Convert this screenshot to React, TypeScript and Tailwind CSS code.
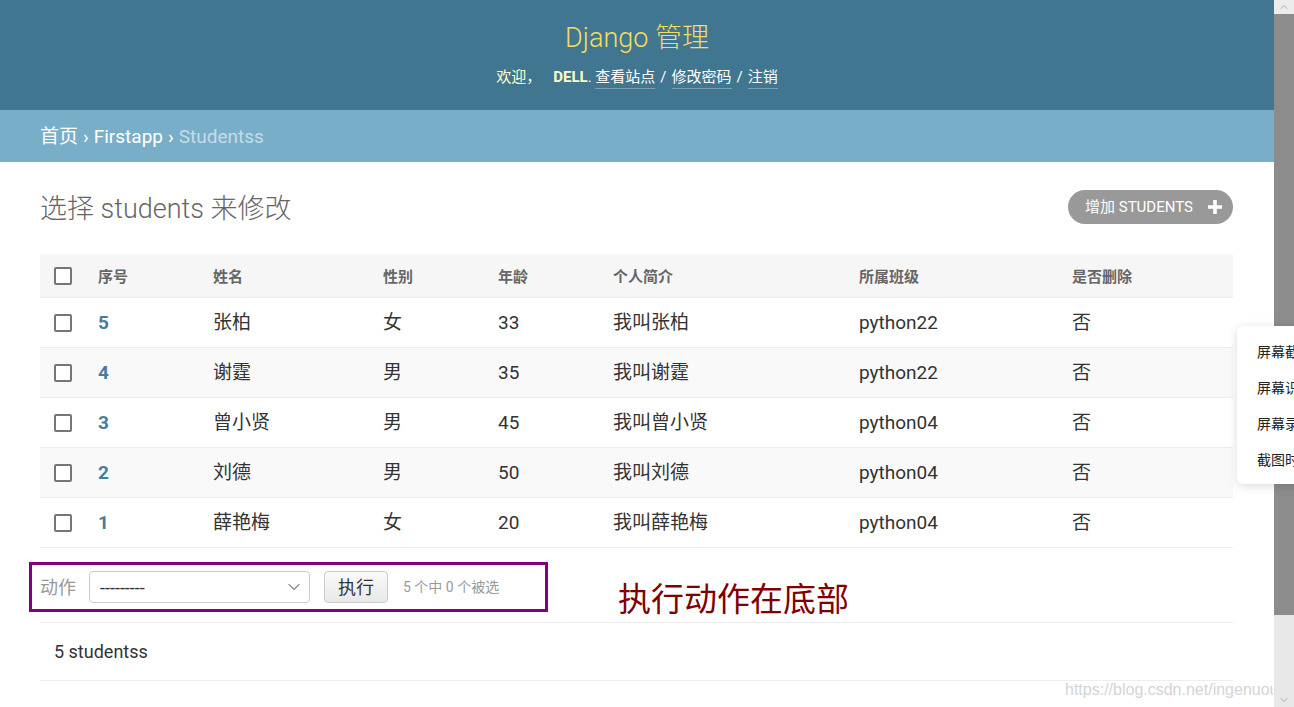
import { ChevronDown, ChevronUp } from "lucide-react";

const font = "font-['Roboto','Noto_Sans_CJK_SC',sans-serif]";

const rows = [
  { id: 5, name: "张柏", sex: "女", age: 33, intro: "我叫张柏", cls: "python22" },
  { id: 4, name: "谢霆", sex: "男", age: 35, intro: "我叫谢霆", cls: "python22" },
  { id: 3, name: "曾小贤", sex: "男", age: 45, intro: "我叫曾小贤", cls: "python04" },
  { id: 2, name: "刘德", sex: "男", age: 50, intro: "我叫刘德", cls: "python04" },
  { id: 1, name: "薛艳梅", sex: "女", age: 20, intro: "我叫薛艳梅", cls: "python04" },
];

const cols = "grid grid-cols-[58px_115px_170px_115px_115px_246px_213px_1fr] items-center";

const Checkbox = () => (
  <div className="ml-[14px] -mt-[2px] w-[18px] h-[18px] border-2 border-[#767676] rounded-[2px] bg-white" />
);

const App = () => {
  return (
    <div className={`relative w-[1294px] h-[707px] overflow-hidden flex bg-white ${font}`}>
      <div className="w-[1274px] flex flex-col">
        {/* header */}
        <header className="h-[110px] bg-[#417690] flex flex-col items-center">
          <div className="mt-[20px] text-[27px] leading-[36px] font-light text-[#f5dd5d]">Django 管理</div>
          <div className="mt-[9px] text-[15px] leading-[24px] text-[#ffffcc] flex items-center">
            <span>欢迎，</span>
            <strong className="ml-[12px] font-bold">DELL</strong>
            <span>.&nbsp;</span>
            <a className="text-white border-b border-white/30 leading-[22px]">查看站点</a>
            <span className="text-white mx-[5px]">/</span>
            <a className="text-white border-b border-white/30 leading-[22px]">修改密码</a>
            <span className="text-white mx-[5px]">/</span>
            <a className="text-white border-b border-white/30 leading-[22px]">注销</a>
          </div>
        </header>

        {/* breadcrumbs */}
        <div className="h-[52px] bg-[#79aec8] flex items-center px-[40px] pt-[3px] text-[19px] text-white">
          <span>首页</span>
          <span className="mx-[5px]">›</span>
          <span>Firstapp</span>
          <span className="mx-[5px]">›</span>
          <span className="text-[#c4dce8]">Studentss</span>
        </div>

        {/* content */}
        <div className="px-[40px] pt-[28px]">
          <div className="flex items-center justify-between h-[34px] pr-[1px]">
            <h1 className="text-[27px] font-light text-[#666] pt-[4px]">选择 students 来修改</h1>
            <button className="h-[34px] w-[165px] rounded-full bg-[#999] text-white text-[15px] flex items-center pl-[17px] pr-[11px] justify-between">
              <span>增加 STUDENTS</span>
              <svg width="14" height="14" viewBox="0 0 14 14">
                <path d="M5.2 0h3.6v5.2H14v3.6H8.8V14H5.2V8.8H0V5.2h5.2z" fill="white" />
              </svg>
            </button>
          </div>

          <div className="mt-[30px] w-[1193px]">
            <div className={`${cols} h-[44px] bg-[#f6f6f6] border-b border-[#eee] text-[15px] font-bold text-[#666] pt-[3px]`}>
              <Checkbox />
              <div>序号</div>
              <div>姓名</div>
              <div>性别</div>
              <div>年龄</div>
              <div>个人简介</div>
              <div>所属班级</div>
              <div>是否删除</div>
            </div>
            {rows.map((r, i) => (
              <div
                key={r.id}
                className={`${cols} h-[50px] border-b border-[#eee] text-[19px] text-[#333] pt-[2px] ${i % 2 === 1 ? "bg-[#f9f9f9]" : "bg-white"}`}
              >
                <Checkbox />
                <div className="font-bold text-[#447e9b]">{r.id}</div>
                <div>{r.name}</div>
                <div>{r.sex}</div>
                <div>{r.age}</div>
                <div>{r.intro}</div>
                <div>{r.cls}</div>
                <div>否</div>
              </div>
            ))}
          </div>

          {/* actions */}
          <div className="mt-[14px] flex items-start">
            <div className="-ml-[11px] w-[519px] h-[50px] border-[3px] border-[#800080] flex items-center pl-[8px]">
              <span className="text-[18px] text-[#999]">动作</span>
              <div className="ml-[13px] w-[221px] h-[32px] border border-[#ccc] rounded-[4px] bg-white flex items-center justify-between pl-[10px] pr-[5px]">
                <span className="text-[18px] text-[#333]">---------</span>
                <ChevronDown size={20} strokeWidth={1.2} color="#333" />
              </div>
              <button className="ml-[14px] w-[64px] h-[32px] border border-[#ccc] rounded-[4px] bg-gradient-to-b from-[#fafafa] to-[#e8e8e8] text-[18px] text-[#333]">
                执行
              </button>
              <span className="ml-[15px] text-[14px] text-[#999]">5 个中 0 个被选</span>
            </div>
            <div className="ml-[70px] mt-[10px] text-[33px] leading-[50px] text-[#800000] font-['Noto_Sans_CJK_SC',sans-serif]">执行动作在底部</div>
          </div>

          {/* paginator */}
          <div className="mt-[0px] w-[1193px] h-[59px] border-y border-[#eee] flex items-center pl-[14px] text-[18px] text-[#333]">
            5 studentss
          </div>
        </div>
      </div>

      {/* scrollbar */}
      <div className="w-[20px] h-full flex flex-col bg-[#e8e8e8]">
        <div className="h-[14px] bg-[#ececec] flex items-center justify-center">
          <ChevronUp size={12} strokeWidth={1.5} color="#9a9a9a" />
        </div>
        <div className="h-[601px] bg-[#8c8c8c]" />
        <div className="flex-1" />
        <div className="h-[14px] flex items-center justify-center">
          <ChevronDown size={12} strokeWidth={1.5} color="#9a9a9a" />
        </div>
      </div>

      {/* context menu */}
      <div className="absolute left-[1237px] top-[326px] w-[120px] h-[158px] bg-white rounded-[6px] shadow-[0_2px_10px_rgba(0,0,0,0.15)] pt-[15px] pl-[20px] text-[14px] text-[#222] flex flex-col gap-[16px] leading-[20px] font-['Noto_Sans_CJK_SC',sans-serif]">
        <div>屏幕截图</div>
        <div>屏幕识图</div>
        <div>屏幕录制</div>
        <div>截图时隐藏</div>
      </div>

      {/* watermark */}
      <div className="absolute left-[1065px] top-[678px] text-[16px] text-[#d4d4d4] font-['Liberation_Sans',sans-serif] w-[208px] overflow-hidden whitespace-nowrap">
        https://blog.csdn.net/ingenuou
      </div>
    </div>
  );
};

export default App;
